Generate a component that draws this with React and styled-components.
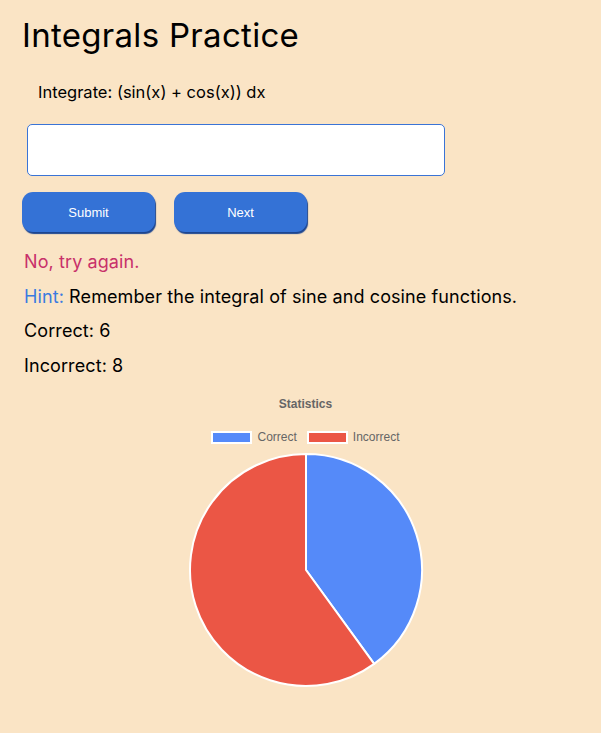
import React, { useState } from "react";
import styled, { createGlobalStyle } from "styled-components";

const GlobalStyle = createGlobalStyle`
  body {
    margin: 0;
    background: #fae4c5;
    font-family: Inter, "Noto Sans CJK JP", sans-serif;
    color: #000;
  }
`;

const Page = styled.main`
  display: flex;
  flex-direction: column;
  padding: 15px 12px 20px 22px;
`;

const Title = styled.h1`
  margin: 0;
  font-size: 33px;
  font-weight: 400;
  line-height: 40px;
  letter-spacing: 0.3px;
`;

const Problem = styled.p`
  margin: 25px 0 0 16px;
  font-size: 16.5px;
  line-height: 24px;
`;

const AnswerInput = styled.input`
  box-sizing: border-box;
  width: 418px;
  height: 52px;
  margin: 20px 0 0 5px;
  border: 1px solid #3a74d6;
  border-radius: 5px;
  background: #fff;
  font-size: 16px;
  padding: 0 10px;
  outline: none;
`;

const ButtonRow = styled.div`
  display: flex;
  gap: 19px;
  margin-top: 16px;
`;

const Button = styled.button`
  width: 133px;
  height: 40px;
  border: none;
  border-radius: 11px;
  background: #3472d6;
  box-shadow: 1px 2px 1px #1c4590;
  color: #fff;
  font-family: "Liberation Sans", Arial, sans-serif;
  font-size: 13px;
  cursor: pointer;
`;

const Line = styled.p`
  margin: 0 0 0 2px;
  font-size: 18px;
  line-height: 34.5px;
  letter-spacing: 0.1px;
  color: ${(p) => p.color || "#000"};
`;

const Feedback = styled(Line)`
  margin-top: 13px;
`;

const HintLabel = styled.span`
  color: #3b7be0;
`;

const Chart = styled.section`
  display: flex;
  flex-direction: column;
  align-items: center;
  margin-top: 14px;
  font-family: "Liberation Sans", Arial, sans-serif;
  color: #666;
  font-size: 12px;
`;

const ChartTitle = styled.div`
  font-weight: 700;
  line-height: 14px;
`;

const Legend = styled.div`
  display: flex;
  gap: 10px;
  margin-top: 19px;
  line-height: 14px;
`;

const LegendItem = styled.div`
  display: flex;
  align-items: center;
  gap: 5px;
`;

const Swatch = styled.span`
  box-sizing: border-box;
  width: 41px;
  height: 13px;
  background: ${(p) => p.color};
  border: 2px solid #fff;
`;

const Pie = styled.svg`
  margin-top: 8px;
  display: block;
`;

const BLUE = "#558af9";
const RED = "#eb5645";

function PieChart({ share }) {
  const c = 118;
  const r = 116;
  const a = share * 2 * Math.PI;
  const x = c + r * Math.sin(a);
  const y = c - r * Math.cos(a);
  const large = share > 0.5 ? 1 : 0;
  return (
    <Pie width="236" height="236" viewBox="0 0 236 236">
      <path
        d={`M${c},${c} L${c},${c - r} A${r},${r} 0 ${large} 1 ${x},${y} Z`}
        fill={BLUE}
        stroke="#fff"
        strokeWidth="2"
        strokeLinejoin="round"
      />
      <path
        d={`M${c},${c} L${x},${y} A${r},${r} 0 ${1 - large} 1 ${c},${c - r} Z`}
        fill={RED}
        stroke="#fff"
        strokeWidth="2"
        strokeLinejoin="round"
      />
    </Pie>
  );
}

export default function App() {
  const [answer, setAnswer] = useState("");
  const correct = 6;
  const incorrect = 8;

  return (
    <Page>
      <GlobalStyle />
      <Title>Integrals Practice</Title>
      <Problem>Integrate: (sin(x) + cos(x)) dx</Problem>
      <AnswerInput value={answer} onChange={(e) => setAnswer(e.target.value)} />
      <ButtonRow>
        <Button>Submit</Button>
        <Button>Next</Button>
      </ButtonRow>
      <Feedback color="#c8316a">No, try again.</Feedback>
      <Line>
        <HintLabel>Hint:</HintLabel> Remember the integral of sine and cosine functions.
      </Line>
      <Line>Correct: {correct}</Line>
      <Line>Incorrect: {incorrect}</Line>
      <Chart>
        <ChartTitle>Statistics</ChartTitle>
        <Legend>
          <LegendItem>
            <Swatch color={BLUE} />
            Correct
          </LegendItem>
          <LegendItem>
            <Swatch color={RED} />
            Incorrect
          </LegendItem>
        </Legend>
        <PieChart share={0.4} />
      </Chart>
    </Page>
  );
}
